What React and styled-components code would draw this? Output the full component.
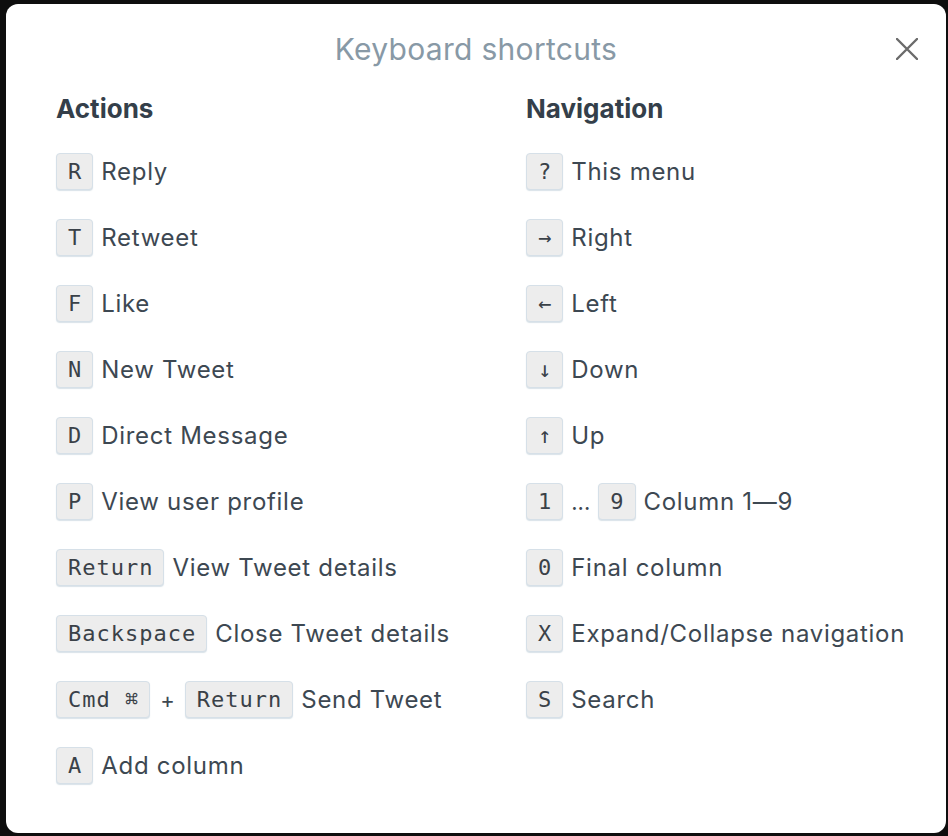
import React from "react";
import styled, { createGlobalStyle } from "styled-components";

const Global = createGlobalStyle`
  html, body { margin: 0; padding: 0; }
  body {
    background: #0e0e0e;
    font-family: Inter, "Noto Sans", "Liberation Sans", sans-serif;
    -webkit-font-smoothing: antialiased;
  }
`;

const Page = styled.div`
  padding: 4px 2px 3px 6px;
  height: 836px;
  box-sizing: border-box;
`;

const Modal = styled.div`
  width: 940px;
  height: 829px;
  background: #fff;
  border-radius: 12px;
  box-sizing: border-box;
  display: flex;
  flex-direction: column;
`;

const Header = styled.div`
  height: 90px;
  padding: 0 28px;
  display: grid;
  grid-template-columns: 1fr auto 1fr;
  align-items: center;
`;

const Title = styled.h1`
  grid-column: 2;
  margin: 0;
  font-size: 30px;
  letter-spacing: 0.3px;
  font-weight: 400;
  color: #8899a6;
  line-height: 34px;
`;

const Close = styled.button`
  grid-column: 3;
  justify-self: end;
  width: 22px;
  height: 22px;
  padding: 0;
  border: 0;
  background: none;
  display: flex;
  cursor: pointer;
`;

const Columns = styled.div`
  display: grid;
  grid-template-columns: 420px 420px;
  column-gap: 50px;
  padding: 0 50px;
`;

const Column = styled.section`
  display: flex;
  flex-direction: column;
`;

const SectionTitle = styled.h2`
  margin: 0 0 30px;
  font-size: 26px;
  line-height: 30px;
  font-weight: 700;
  color: #343f4a;
`;

const List = styled.ul`
  list-style: none;
  margin: -1px 0 0;
  padding: 0;
  display: flex;
  flex-direction: column;
  gap: 29px;
`;

const Row = styled.li`
  display: flex;
  align-items: center;
  height: 37px;
  gap: 8px;
`;

const Key = styled.kbd`
  box-sizing: border-box;
  height: 37px;
  min-width: 37px;
  padding: 0 10px 0 11px;
  display: inline-flex;
  align-items: center;
  justify-content: center;
  background: #ededed;
  border: 1px solid #d6e0e8;
  border-radius: 4px;
  box-shadow: 0 1px 1px rgba(170, 190, 205, 0.45);
  font-family: "DejaVu Sans Mono", "Liberation Mono", monospace;
  font-size: 22px;
  letter-spacing: 1px;
  color: #3a4148;
`;

const Sep = styled.span`
  font-size: 22px;
  color: #3d4852;
  padding: 0 ${(p) => (p.$wide ? "2px" : "0")};
`;

const Label = styled.span`
  font-size: 24px;
  letter-spacing: 0.7px;
  color: #3d4852;
  white-space: nowrap;
`;

const actions = [
  { keys: ["R"], label: "Reply" },
  { keys: ["T"], label: "Retweet" },
  { keys: ["F"], label: "Like" },
  { keys: ["N"], label: "New Tweet" },
  { keys: ["D"], label: "Direct Message" },
  { keys: ["P"], label: "View user profile" },
  { keys: ["Return"], label: "View Tweet details" },
  { keys: ["Backspace"], label: "Close Tweet details" },
  { keys: ["Cmd ⌘", "+", "Return"], label: "Send Tweet" },
  { keys: ["A"], label: "Add column" },
];

const navigation = [
  { keys: ["?"], label: "This menu" },
  { keys: ["→"], label: "Right" },
  { keys: ["←"], label: "Left" },
  { keys: ["↓"], label: "Down" },
  { keys: ["↑"], label: "Up" },
  { keys: ["1", "…", "9"], label: "Column 1—9" },
  { keys: ["0"], label: "Final column" },
  { keys: ["X"], label: "Expand/Collapse navigation" },
  { keys: ["S"], label: "Search" },
];

function Shortcut({ keys, label }) {
  return (
    <Row>
      {keys.map((k, i) =>
        k === "+" ? (
          <Sep key={i} $wide>+</Sep>
        ) : k === "…" ? (
          <Sep key={i}>...</Sep>
        ) : (
          <Key key={i}>{k}</Key>
        )
      )}
      <Label>{label}</Label>
    </Row>
  );
}

export default function App() {
  return (
    <>
      <Global />
      <Page>
        <Modal>
          <Header>
            <Title>Keyboard shortcuts</Title>
            <Close aria-label="Close">
              <svg width="22" height="22" viewBox="0 0 22 22">
                <path d="M1 1 L21 21 M21 1 L1 21" stroke="#6b6b6b" strokeWidth="2.4" strokeLinecap="round" />
              </svg>
            </Close>
          </Header>
          <Columns>
            <Column>
              <SectionTitle>Actions</SectionTitle>
              <List>
                {actions.map((s, i) => (
                  <Shortcut key={i} {...s} />
                ))}
              </List>
            </Column>
            <Column>
              <SectionTitle>Navigation</SectionTitle>
              <List>
                {navigation.map((s, i) => (
                  <Shortcut key={i} {...s} />
                ))}
              </List>
            </Column>
          </Columns>
        </Modal>
      </Page>
    </>
  );
}
